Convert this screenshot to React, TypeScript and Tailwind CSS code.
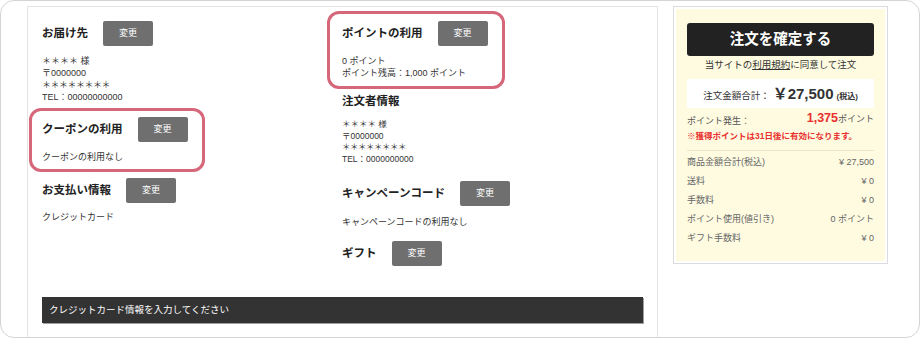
const font = { fontFamily: '"Liberation Sans", "Noto Sans CJK JP", sans-serif' };

function ChangeButton() {
  return (
    <button
      type="button"
      className="ml-[15px] flex h-[25px] w-[50px] shrink-0 items-center justify-center rounded-[2px] bg-[#6f6f6f] text-[9px] text-white"
    >
      変更
    </button>
  );
}

function Header({ title }: { title: string }) {
  return (
    <div className="flex h-[25px] items-center">
      <h3 className="text-[11.5px] font-bold text-[#222]">{title}</h3>
      <ChangeButton />
    </div>
  );
}

function SummaryRow({ label, value }: { label: string; value: string }) {
  return (
    <div className="flex items-center justify-between leading-[19px] text-[9px] text-[#666]">
      <span>{label}</span>
      <span>{value}</span>
    </div>
  );
}

export default function App() {
  return (
    <div
      style={font}
      className="relative flex h-[338px] w-[920px] overflow-hidden rounded-[14px] border border-[#d4d4d4] bg-white pl-[26px] pt-[5px]"
    >
      {/* main panel */}
      <div className="flex h-[360px] w-[631px] shrink-0 flex-col border border-[#e4e4e4] px-[14px] pt-[14px]">
        <div className="flex h-[276px]">
          <div className="w-[300px] shrink-0">
            <Header title="お届け先" />
            <div className="mt-[9px] text-[9px] leading-[12px] text-[#333]">
              <p>＊＊＊＊ 様</p>
              <p>〒0000000</p>
              <p className="tracking-[-0.5px]">＊＊＊＊＊＊＊＊</p>
              <p>TEL：00000000000</p>
            </div>

            <div className="mt-[14px]">
              <Header title="クーポンの利用" />
            </div>
            <p className="mt-[9px] text-[9px] leading-[12px] text-[#333]">クーポンの利用なし</p>

            <div className="mt-[15px]">
              <Header title="お支払い情報" />
            </div>
            <p className="mt-[8px] text-[9px] leading-[12px] text-[#333]">クレジットカード</p>
          </div>

          <div className="flex-1">
            <Header title="ポイントの利用" />
            <div className="mt-[9px] text-[9px] leading-[12px] text-[#333]">
              <p>0 ポイント</p>
              <p>ポイント残高：1,000 ポイント</p>
            </div>

            <h3 className="mt-[14px] flex h-[18px] items-center text-[11.5px] font-bold text-[#222]">注文者情報</h3>
            <div className="mt-[8px] text-[8.5px] leading-[11.5px] text-[#333]">
              <p>＊＊＊＊ 様</p>
              <p>〒0000000</p>
              <p className="tracking-[-0.5px]">＊＊＊＊＊＊＊＊</p>
              <p>TEL：0000000000</p>
            </div>

            <div className="mt-[16px]">
              <Header title="キャンペーンコード" />
            </div>
            <p className="mt-[10px] text-[9px] leading-[12px] text-[#333]">キャンペーンコードの利用なし</p>

            <div className="mt-[13px]">
              <Header title="ギフト" />
            </div>
          </div>
        </div>

        <div className="flex h-[26px] items-center bg-[#333] pl-[7px] text-[9.5px] text-white shadow-[1px_1px_0_#a0a0a0]">
          クレジットカード情報を入力してください
        </div>
      </div>

      {/* order summary */}
      <div className="ml-[15px] h-[258px] w-[215px] shrink-0 border border-[#dcdcdc] p-[2px]">
        <div className="h-full bg-[#fefbe1] px-[11px] pt-[14px]">
          <button
            type="button"
            className="flex h-[33px] w-full items-center justify-center rounded-[3px] bg-[#222] text-[14.5px] font-bold text-white"
          >
            注文を確定する
          </button>
          <p className="mt-[2px] text-center text-[9.5px] leading-[14px] text-[#333]">
            当サイトの<span className="underline">利用規約</span>に同意して注文
          </p>

          <div className="mt-[7px] flex h-[29px] items-baseline justify-center gap-[3px] bg-white pt-[7px] text-[#333]">
            <span className="text-[9.5px]">注文金額合計：</span>
            <span className="text-[15px] font-bold leading-none">￥27,500</span>
            <span className="text-[8px] font-bold">(税込)</span>
          </div>

          <div className="mt-[6px] flex h-[14px] items-end justify-between">
            <span className="text-[9px] text-[#555]">ポイント発生：</span>
            <span className="text-[9px] text-[#555]">
              <span className="text-[12.5px] font-bold text-[#e8312f]">1,375</span>ポイント
            </span>
          </div>
          <p className="mt-[2px] text-[8.5px] font-bold leading-[12px] text-[#e8312f]">
            ※獲得ポイントは31日後に有効になります。
          </p>

          <div className="mt-[8px] h-px bg-[#ebe7cf]" />

          <div className="mt-[2px]">
            <SummaryRow label="商品金額合計(税込)" value="¥ 27,500" />
            <SummaryRow label="送料" value="¥ 0" />
            <SummaryRow label="手数料" value="¥ 0" />
            <SummaryRow label="ポイント使用(値引き)" value="0 ポイント" />
            <SummaryRow label="ギフト手数料" value="¥ 0" />
          </div>
        </div>
      </div>

      {/* highlight marks */}
      <div className="absolute left-[28px] top-[107px] h-[64px] w-[176px] rounded-[12px] border-[3px] border-[#d6677b]" />
      <div className="absolute left-[326px] top-[10px] h-[78px] w-[178px] rounded-[12px] border-[3px] border-[#d6677b]" />
    </div>
  );
}
